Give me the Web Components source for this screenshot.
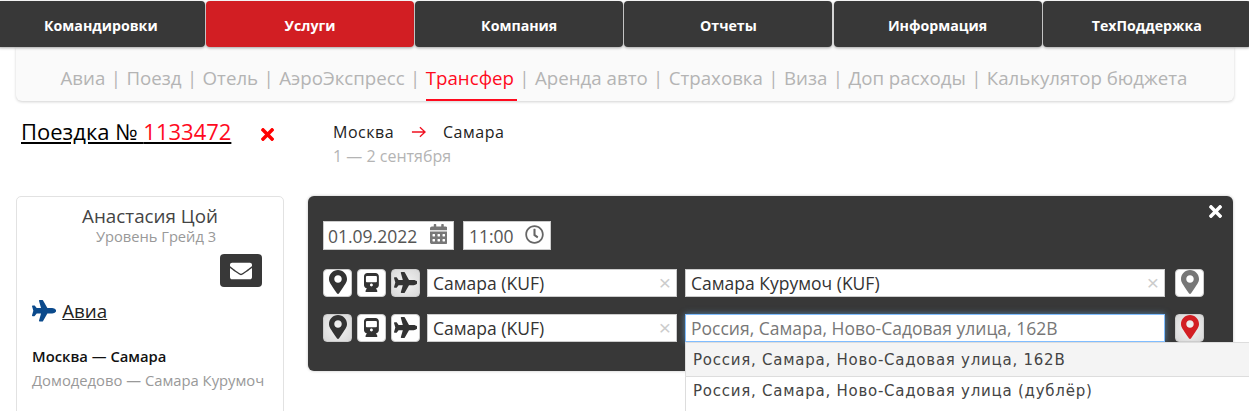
<!DOCTYPE html>
<html lang="ru">
<head>
<meta charset="utf-8">
<title>Трансфер</title>
<style>
  html, body { margin: 0; padding: 0; background: #fff; }
  body { height: 411px; overflow: hidden; font-family: "Open Sans", sans-serif; color: #000; }
  .content { display: grid; grid-template-columns: 268px 925px; column-gap: 24px; padding: 0 0 0 16px; margin-top: 15px; height: 215px; overflow: visible; }
</style>
</head>
<body>
<top-tabs>
  <tab-item>Командировки</tab-item>
  <tab-item active>Услуги</tab-item>
  <tab-item>Компания</tab-item>
  <tab-item>Отчеты</tab-item>
  <tab-item>Информация</tab-item>
  <tab-item>ТехПоддержка</tab-item>
</top-tabs>
<service-nav active="Трансфер" items="Авиа,Поезд,Отель,АэроЭкспресс,Трансфер,Аренда авто,Страховка,Виза,Доп расходы,Калькулятор бюджета"></service-nav>
<trip-head number="1133472" from="Москва" to="Самара" dates="1 — 2 сентября"></trip-head>
<div class="content">
  <person-card></person-card>
  <transfer-panel>
    <route-row active="plane" from="Самара (KUF)" to="Самара Курумоч (KUF)"></route-row>
    <route-row active="pin" from="Самара (KUF)" placeholder="Россия, Самара, Ново-Садовая улица, 162В" focused></route-row>
  </transfer-panel>
</div>

<script>
const ICONS = {
  plane: ['0 0 576 512', 'M480 192H365.71L260.61 8.06A16.014 16.014 0 0 0 246.71 0h-65.5c-10.63 0-18.3 10.17-15.38 20.39L214.86 192H112l-43.2-57.6c-3.02-4.03-7.77-6.4-12.8-6.4H16.01C5.6 128-2.04 137.78.49 147.88L32 256 .49 364.12C-2.04 374.22 5.6 384 16.01 384H56c5.04 0 9.78-2.37 12.8-6.4L112 320h102.86l-49.03 171.6c-2.92 10.22 4.75 20.4 15.38 20.4h65.5c5.74 0 11.04-3.08 13.89-8.06L365.71 320H480c35.35 0 96-28.65 96-64s-60.65-64-96-64z'],
  pin: ['0 0 384 512', 'M172.268 501.67C26.97 291.031 0 255.28 0 192 0 85.961 85.961 0 192 0s192 85.961 192 192c0 63.28-26.97 99.031-172.268 309.67-9.535 13.774-29.93 13.773-39.464 0zM192 272c44.183 0 80-35.817 80-80s-35.817-80-80-80-80 35.817-80 80 35.817 80 80 80z'],
  train: ['0 0 400 512', 'M400 90v240c0 42-34 76-76 80l34 66c6 12 0 36-16 36H58c-16 0-22-24-16-36l34-66c-42-4-76-38-76-80V90C0 40 40 0 90 0h220c50 0 90 40 90 90zm-52 130V110c0-18-14-32-32-32H84c-18 0-32 14-32 32v110c0 18 14 32 32 32h232c18 0 32-14 32-32zm-148 64c-22 0-40 18-40 40s18 40 40 40 40-18 40-40-18-40-40-40z'],
  envelope: ['0 0 512 512', 'M502.3 190.8c3.9-3.1 9.7-.2 9.7 4.7V400c0 26.5-21.5 48-48 48H48c-26.5 0-48-21.5-48-48V195.6c0-5 5.7-7.8 9.7-4.7 22.4 17.4 52.1 39.5 154.1 113.6 21.1 15.4 56.7 47.8 92.2 47.6 35.7.3 72-32.8 92.3-47.6 102-74.1 131.6-96.3 154-113.7zM256 320c23.2.4 56.6-29.2 73.4-41.4 132.7-96.3 142.8-104.7 173.4-128.7 5.8-4.5 9.2-11.5 9.2-18.9v-19c0-26.5-21.5-48-48-48H48C21.5 64 0 85.5 0 112v19c0 7.4 3.4 14.3 9.2 18.9 30.6 23.9 40.7 32.4 173.4 128.7 16.8 12.2 50.2 41.8 73.4 41.4z'],
  times: ['0 0 352 512', 'M242.72 256l100.07-100.07c12.28-12.28 12.28-32.19 0-44.48l-22.24-22.24c-12.28-12.28-32.19-12.28-44.48 0L176 189.28 75.93 89.21c-12.28-12.28-32.19-12.28-44.48 0L9.21 111.45c-12.28 12.28-12.28 32.19 0 44.48L109.28 256 9.21 356.07c-12.28 12.28-12.28 32.19 0 44.48l22.24 22.24c12.28 12.28 32.2 12.28 44.48 0L176 322.72l100.07 100.07c12.28 12.28 32.2 12.28 44.48 0l22.24-22.24c12.28-12.28 12.28-32.19 0-44.48L242.72 256z'],
  clock: ['0 0 512 512', 'M256 8C119 8 8 119 8 256s111 248 248 248 248-111 248-248S393 8 256 8zm0 448c-110.5 0-200-89.5-200-200S145.5 56 256 56s200 89.5 200 200-89.5 200-200 200zm61.8-104.4l-84.9-61.7c-3.1-2.3-4.9-5.9-4.9-9.7V116c0-6.6 5.4-12 12-12h32c6.6 0 12 5.4 12 12v141.7l66.8 48.6c5.4 3.9 6.5 11.4 2.6 16.8L334.6 349c-3.9 5.3-11.4 6.5-16.8 2.6z'],
  calendar: ['0 0 448 512', 'M0 464c0 26.5 21.5 48 48 48h352c26.5 0 48-21.5 48-48V192H0v272zm320-196c0-6.6 5.4-12 12-12h40c6.6 0 12 5.4 12 12v40c0 6.6-5.4 12-12 12h-40c-6.6 0-12-5.4-12-12v-40zm0 128c0-6.6 5.4-12 12-12h40c6.6 0 12 5.4 12 12v40c0 6.6-5.4 12-12 12h-40c-6.6 0-12-5.4-12-12v-40zM192 268c0-6.6 5.4-12 12-12h40c6.6 0 12 5.4 12 12v40c0 6.6-5.4 12-12 12h-40c-6.6 0-12-5.4-12-12v-40zm0 128c0-6.6 5.4-12 12-12h40c6.6 0 12 5.4 12 12v40c0 6.6-5.4 12-12 12h-40c-6.6 0-12-5.4-12-12v-40zM64 268c0-6.6 5.4-12 12-12h40c6.6 0 12 5.4 12 12v40c0 6.6-5.4 12-12 12H76c-6.6 0-12-5.4-12-12v-40zm0 128c0-6.6 5.4-12 12-12h40c6.6 0 12 5.4 12 12v40c0 6.6-5.4 12-12 12H76c-6.6 0-12-5.4-12-12v-40zM400 64h-48V16c0-8.8-7.2-16-16-16h-32c-8.8 0-16 7.2-16 16v48H160V16c0-8.8-7.2-16-16-16h-32c-8.8 0-16 7.2-16 16v48H48C21.5 64 0 85.5 0 112v48h448v-48c0-26.5-21.5-48-48-48z']
};

class FaIcon extends HTMLElement {
  connectedCallback() {
    const [box, d] = ICONS[this.getAttribute('name')];
    this.attachShadow({ mode: 'open' }).innerHTML = `
      <style>
        :host { display: inline-flex; height: var(--h, 16px); line-height: 0; color: inherit; }
        svg { height: 100%; width: auto; fill: currentColor; display: block; }
      </style>
      <svg viewBox="${box}"><path d="${d}"/></svg>`;
  }
}
customElements.define('fa-icon', FaIcon);

class TopTabs extends HTMLElement {
  constructor() {
    super();
    this.attachShadow({ mode: 'open' }).innerHTML = `
      <style>
        :host {
          display: grid; grid-template-columns: repeat(6, 208px); column-gap: 1.2px;
          margin-left: -3.2px; width: 1260px; padding-top: 1px; height: 46px; position: relative; z-index: 2;
        }
      </style>
      <slot></slot>`;
  }
}
customElements.define('top-tabs', TopTabs);

class TabItem extends HTMLElement {
  constructor() {
    super();
    this.attachShadow({ mode: 'open' }).innerHTML = `
      <style>
        :host {
          display: flex; align-items: center; justify-content: center;
          background: #383838; color: #fff; border-radius: 4px;
          font: 700 14.2px "Open Sans", sans-serif; padding-top: 3px; box-sizing: border-box;
          box-shadow: 0 1px 3px rgba(0,0,0,.35);
        }
        :host([active]) { background: #d21e23; }
      </style>
      <slot></slot>`;
  }
}
customElements.define('tab-item', TabItem);

class ServiceNav extends HTMLElement {
  connectedCallback() {
    const active = this.getAttribute('active');
    const links = this.getAttribute('items').split(',').map(t =>
      `<a class="${t === active ? 'on' : ''}">${t}</a>`).join('<i>|</i>');
    this.attachShadow({ mode: 'open' }).innerHTML = `
      <style>
        :host {
          display: flex; justify-content: center; margin: 0 15px 0 16px; padding-right: 2px; height: 54px; box-sizing: border-box;
          background: #fafafa; border-radius: 0 0 6px 6px; box-shadow: 0 1px 3px rgba(0,0,0,.18);
          font: 400 18.7px "Open Sans", sans-serif; color: #b4b4b4;
        }
        a { display: block; padding: 18px 0 0; height: 54px; box-sizing: border-box; line-height: 26px; }
        a.on { color: #ff0a1e; border-bottom: 2px solid #ff0a1e; padding-right: 3px; margin-right: -3px; }
        i { font-style: normal; padding: 18px 5.4px 0; line-height: 26px; }
      </style>
      ${links}`;
  }
}
customElements.define('service-nav', ServiceNav);

class TripHead extends HTMLElement {
  connectedCallback() {
    const a = n => this.getAttribute(n);
    this.attachShadow({ mode: 'open' }).innerHTML = `
      <style>
        :host { display: flex; align-items: flex-start; height: 80px; padding: 15px 0 0 21px; box-sizing: border-box; font-family: "Open Sans", sans-serif; }
        .title { font-size: 22px; line-height: 30px; color: #000; text-decoration: underline; width: 240px; }
        .title b { font-weight: 400; color: #ff0a1e; }
        .close { color: #f00; --h: 19px; margin: 9px 58px 0 0; width: 14px; }
        .route { font-size: 16px; letter-spacing: .5px; line-height: 24px; color: #222; display: flex; align-items: center; padding-top: 4px; }
        .route svg { width: 15px; height: 12px; margin: 0 17px; }
        .dates { font-size: 16px; line-height: 25px; color: #b4b4b4; }
      </style>
      <div class="title">Поездка № <b>${a('number')}</b></div>
      <fa-icon class="close" name="times"></fa-icon>
      <div>
        <div class="route">${a('from')}
          <svg viewBox="0 0 16 12" fill="none" stroke="#f01020" stroke-width="1.4"><path d="M1 6h14M9.500 1l5.500 5-5.500 5"/></svg>
          ${a('to')}</div>
        <div class="dates">${a('dates')}</div>
      </div>`;
  }
}
customElements.define('trip-head', TripHead);

class PersonCard extends HTMLElement {
  constructor() {
    super();
    this.attachShadow({ mode: 'open' }).innerHTML = `
      <style>
        :host {
          display: block; height: 260px; box-sizing: border-box; border: 1px solid #e2e2e2; border-radius: 5px;
          font-family: "Open Sans", sans-serif; padding: 9px 15px 0; text-align: center;
        }
        .name { font-size: 18.8px; line-height: 21px; color: #444; }
        .grade { font-size: 14.7px; line-height: 18px; color: #999; padding-left: 12px; }
        .mail { display: flex; justify-content: flex-end; padding: 9px 6px 0 0; }
        .mail span { display: flex; align-items: center; justify-content: center; width: 42px; height: 33px; background: #383838; border-radius: 4px; color: #fff; --h: 22px; }
        .avia { display: flex; align-items: center; text-align: left; margin-top: 11px; font-size: 18.8px; color: #222; height: 26px; }
        .avia fa-icon { --h: 21.5px; color: #0b4a8c; margin-right: 6px; }
        .avia u { line-height: 26px; }
        .leg { text-align: left; margin-top: 20px; font-size: 14.8px; line-height: 24px; font-weight: 600; color: #111; }
        .air { text-align: left; font-size: 14.8px; line-height: 24px; color: #999; white-space: nowrap; }
      </style>
      <div class="name">Анастасия Цой</div>
      <div class="grade">Уровень Грейд 3</div>
      <div class="mail"><span><fa-icon name="envelope"></fa-icon></span></div>
      <div class="avia"><fa-icon name="plane"></fa-icon><u>Авиа</u></div>
      <div class="leg">Москва — Самара</div>
      <div class="air">Домодедово — Самара Курумоч</div>`;
  }
}
customElements.define('person-card', PersonCard);

class TransferPanel extends HTMLElement {
  constructor() {
    super();
    this.attachShadow({ mode: 'open' }).innerHTML = `
      <style>
        :host {
          display: block; position: relative; height: 175px; box-sizing: border-box; background: #383838; border-radius: 6px;
          padding: 25px 0 0 15px; font-family: "Open Sans", sans-serif; box-shadow: 0 0 3px rgba(0,0,0,.25);
        }
        .close { position: absolute; top: 6px; right: 11px; color: #fff; --h: 19px; }
        .when { display: flex; gap: 9px; margin-bottom: 19px; }
        .field {
          display: flex; align-items: center; justify-content: space-between; height: 29px; box-sizing: border-box;
          background: #fff; border: 1px solid #ccc; font-size: 17.5px; color: #555; padding: 0 6px 0 4px;
        }
        .date { width: 131px; } .time { width: 88px; padding-left: 5px; }
        .date fa-icon { --h: 20px; color: #777; margin-top: -3px; }
        .time fa-icon { --h: 19px; color: #666; margin-top: -3px; }
        ::slotted(route-row) { margin-bottom: 17px; }
      </style>
      <fa-icon class="close" name="times"></fa-icon>
      <div class="when">
        <div class="field date">01.09.2022<fa-icon name="calendar"></fa-icon></div>
        <div class="field time">11:00<fa-icon name="clock"></fa-icon></div>
      </div>
      <slot></slot>
      <address-suggest>
        <div>Россия, Самара, Ново-Садовая улица, 162В</div>
        <div>Россия, Самара, Ново-Садовая улица (дублёр)</div>
      </address-suggest>`;
  }
}

class IconBtn extends HTMLElement {
  connectedCallback() {
    this.attachShadow({ mode: 'open' }).innerHTML = `
      <style>
        :host {
          display: flex; align-items: center; justify-content: center; width: 29px; height: 28px; box-sizing: border-box;
          background: #fff; border: 1px solid #ccc; border-radius: 4px; color: #333; flex: none;
        }
        :host([on]) { background: radial-gradient(#f4f4f4, #d8d8d8); }
        fa-icon { --h: var(--ih, 21px); margin-top: var(--it, 0); }
      </style>
      <fa-icon name="${this.getAttribute('name')}"></fa-icon>`;
  }
}
customElements.define('icon-btn', IconBtn);

class RouteRow extends HTMLElement {
  connectedCallback() {
    const active = this.getAttribute('active');
    const to = this.getAttribute('to');
    const focused = this.hasAttribute('focused');
    const btn = n => `<icon-btn name="${n}" style="--ih:${n === 'pin' ? 24 : n === 'plane' ? 21 : 19}px;--it:-2px" ${active === n ? 'on' : ''}></icon-btn>`;
    this.attachShadow({ mode: 'open' }).innerHTML = `
      <style>
        :host { display: flex; align-items: center; height: 28px; font-family: "Open Sans", sans-serif; }
        .btns { display: flex; gap: 5px; margin-right: 7px; }
        .inp {
          display: flex; align-items: center; justify-content: space-between; height: 28px; box-sizing: border-box;
          background: #fff; border: 1px solid #ccc; font-size: 17.5px; color: #333; padding: 0 5px 0 5px; white-space: nowrap;
        }
        .inp i { font: 400 21px "Liberation Sans", sans-serif; color: #ccc; }
        .from { width: 250px; margin-right: 8px; }
        .to { width: 480px; margin-right: 10px; }
        .to.focus { border-color: #80bdff; box-shadow: 0 0 6px rgba(102,175,233,.6); color: #777; }
        .end { --ih: 24px; --it: -2px; width: 29px; }
        .end.grey { color: #777; }
        .end.red { color: #d21e23; }
      </style>
      <div class="btns">${btn('pin')}${btn('train')}${btn('plane')}</div>
      <div class="inp from">${this.getAttribute('from')}<i>×</i></div>
      <div class="inp to ${focused ? 'focus' : ''}">${to || this.getAttribute('placeholder')}${focused ? '' : '<i>×</i>'}</div>
      <icon-btn class="end ${focused ? 'red' : 'grey'}" name="pin" ${focused ? 'on' : ''}></icon-btn>`;
  }
}
customElements.define('route-row', RouteRow);

class AddressSuggest extends HTMLElement {
  constructor() {
    super();
    this.attachShadow({ mode: 'open' }).innerHTML = `
      <style>
        :host {
          display: block; position: absolute; left: 377px; top: 146px; width: 564px; background: #fff;
          border: 1px solid #ddd; border-right: 0; z-index: 5; font: 400 15px "DejaVu Sans", sans-serif; letter-spacing: .75px; color: #444;
        }
        ::slotted(div) { height: 36px; line-height: 29px; padding-left: 7px; box-sizing: border-box; }
        ::slotted(div:first-child) { height: 34px; line-height: 34px; background: #f4f4f4; border-bottom: 1px solid #ddd; }
      </style>
      <slot></slot>`;
  }
}
customElements.define('address-suggest', AddressSuggest);
customElements.define('transfer-panel', TransferPanel);
</script>
</body>
</html>
